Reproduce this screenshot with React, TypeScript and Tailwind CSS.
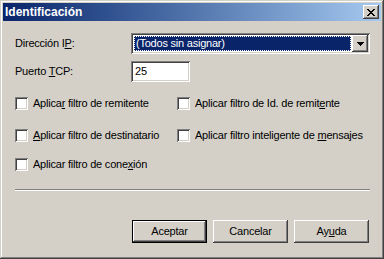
import React from 'react';

const raised =
  'shadow-[inset_-1px_-1px_#404040,inset_1px_1px_#ffffff,inset_-2px_-2px_#808080,inset_2px_2px_#d4d0c8]';
const sunken =
  'shadow-[inset_1px_1px_#808080,inset_-1px_-1px_#ffffff,inset_2px_2px_#404040,inset_-2px_-2px_#d4d0c8]';

const Checkbox: React.FC<{ children: React.ReactNode }> = ({ children }) => (
  <div className="flex items-center h-[13px] whitespace-nowrap">
    <div className={`w-[13px] h-[13px] shrink-0 bg-white ${sunken}`} />
    <span className="ml-[5px] leading-[13px]">{children}</span>
  </div>
);

const Button: React.FC<{ children: React.ReactNode; isDefault?: boolean }> = ({ children, isDefault }) => (
  <div
    className={`w-[75px] h-[23px] flex items-center justify-center bg-[#d4d0c8] ${
      isDefault
        ? 'border border-black shadow-[inset_-1px_-1px_#404040,inset_1px_1px_#ffffff,inset_-2px_-2px_#808080]'
        : raised
    }`}
  >
    {children}
  </div>
);

export default function App() {
  return (
    <div
      className="w-[384px] h-[259px] bg-[#d4d0c8] p-[3px] text-[11px] tracking-[-0.22px] text-black shadow-[inset_-1px_-1px_#404040,inset_1px_1px_#d4d0c8,inset_-2px_-2px_#808080,inset_2px_2px_#ffffff]"
      style={{ fontFamily: '"Liberation Sans", Arial, sans-serif' }}
    >
      {/* title bar */}
      <div className="h-[18px] flex items-center justify-between bg-gradient-to-r from-[#0a246a] to-[#a6caf0] pl-[2px] pr-[2px]">
        <span className="text-white font-bold text-[12px] tracking-normal leading-none">Identificación</span>
        <div className={`w-[16px] h-[14px] flex items-center justify-center bg-[#d4d0c8] ${raised}`}>
          <svg width="8" height="7" viewBox="0 0 8 7" shapeRendering="crispEdges">
            <path
              d="M0 0h2v1h-2zM6 0h2v1h-2zM1 1h2v1h-2zM5 1h2v1h-2zM2 2h4v1h-4zM3 3h2v1h-2zM2 4h4v1h-4zM1 5h2v1h-2zM5 5h2v1h-2zM0 6h2v1h-2zM6 6h2v1h-2z"
              fill="#000"
            />
          </svg>
        </div>
      </div>

      <div className="pl-[12px] pr-[11px]">
        {/* IP row */}
        <div className="flex items-center mt-[12px] h-[21px]">
          <span className="w-[116px]">
            Dirección I<u>P</u>:
          </span>
          <div className={`w-[239px] h-[21px] bg-white p-[2px] flex ${sunken}`}>
            <div className="flex-1 m-[1px] bg-[#0a246a] border border-dotted border-[#fff] text-white pl-[1px] flex items-center leading-none">
              (Todos sin asignar)
            </div>
            <div className={`w-[16px] h-[17px] bg-[#d4d0c8] flex items-center justify-center ${raised}`}>
              <svg width="7" height="4" viewBox="0 0 7 4" shapeRendering="crispEdges">
                <path d="M0 0h7v1h-7zM1 1h5v1h-5zM2 2h3v1h-3zM3 3h1v1h-1z" fill="#000" />
              </svg>
            </div>
          </div>
        </div>

        {/* TCP row */}
        <div className="flex items-center mt-[7px] h-[21px]">
          <span className="w-[116px]">
            Puerto <u>T</u>CP:
          </span>
          <div className={`w-[59px] h-[21px] bg-white flex items-center pl-[4px] ${sunken}`}>25</div>
        </div>

        {/* checkboxes */}
        <div className="grid grid-cols-[162px_1fr] mt-[15px]">
          <Checkbox>
            Aplica<u>r</u> filtro de remitente
          </Checkbox>
          <Checkbox>
            Aplicar filtro de Id. de remit<u>e</u>nte
          </Checkbox>
        </div>
        <div className="grid grid-cols-[162px_1fr] mt-[19px]">
          <Checkbox>
            <u>A</u>plicar filtro de destinatario
          </Checkbox>
          <Checkbox>
            Aplicar filtro inteligente de <u>m</u>ensajes
          </Checkbox>
        </div>
        <div className="mt-[16px]">
          <Checkbox>
            Aplicar filtro de cone<u>x</u>ión
          </Checkbox>
        </div>

        {/* separator */}
        <div className="mt-[18px] h-[2px] border-t border-[#808080] border-b border-b-white" />

        {/* buttons */}
        <div className="flex justify-end gap-[6px] mt-[29px] pr-[1px]">
          <Button isDefault>Aceptar</Button>
          <Button>Cancelar</Button>
          <Button>
            Ay<u>u</u>da
          </Button>
        </div>
      </div>
    </div>
  );
}
